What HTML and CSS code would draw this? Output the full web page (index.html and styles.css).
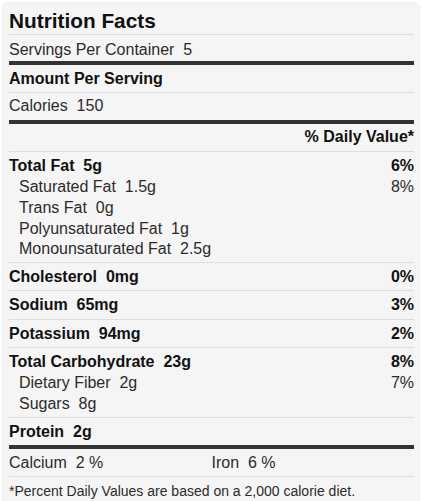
FILE: index.html
```html
<!DOCTYPE html>
<html lang="en">
<head>
<meta charset="utf-8">
<title>Nutrition Facts</title>
<link rel="stylesheet" href="styles.css">
</head>
<body>
<section class="label">
  <h1 class="title">Nutrition Facts</h1>
  <div class="servings">Servings Per Container&nbsp; 5</div>
  <div class="amount">Amount Per Serving</div>
  <div class="calories">Calories&nbsp; 150</div>
  <div class="dv-head">% Daily Value*</div>

  <div class="group group-fat">
    <div class="row main"><span>Total Fat&nbsp; 5g</span><span>6%</span></div>
    <div class="row sub"><span>Saturated Fat&nbsp; 1.5g</span><span>8%</span></div>
    <div class="row sub"><span>Trans Fat&nbsp; 0g</span></div>
    <div class="row sub"><span>Polyunsaturated Fat&nbsp; 1g</span></div>
    <div class="row sub"><span>Monounsaturated Fat&nbsp; 2.5g</span></div>
  </div>

  <div class="group">
    <div class="row main"><span>Cholesterol&nbsp; 0mg</span><span>0%</span></div>
  </div>
  <div class="group">
    <div class="row main"><span>Sodium&nbsp; 65mg</span><span>3%</span></div>
  </div>
  <div class="group">
    <div class="row main"><span>Potassium&nbsp; 94mg</span><span>2%</span></div>
  </div>
  <div class="group">
    <div class="row main"><span>Total Carbohydrate&nbsp; 23g</span><span>8%</span></div>
    <div class="row sub"><span>Dietary Fiber&nbsp; 2g</span><span>7%</span></div>
    <div class="row sub"><span>Sugars&nbsp; 8g</span></div>
  </div>
  <div class="group group-protein">
    <div class="row main"><span>Protein&nbsp; 2g</span></div>
  </div>

  <div class="vitamins">
    <span>Calcium&nbsp; 2 %</span>
    <span>Iron&nbsp; 6 %</span>
  </div>
  <p class="footnote">*Percent Daily Values are based on a 2,000 calorie diet.</p>
</section>
</body>
</html>
```

FILE: styles.css
```css
html, body {
  margin: 0;
  padding: 0;
  background: #ffffff;
}

body {
  font-family: "Liberation Sans", Arial, sans-serif;
  font-size: 16px;
  line-height: 1.3;
  color: #2b2b2b;
}

.label {
  margin: 2px;
  border: 1px solid #efefef;
  border-radius: 6px;
  background: #f5f5f5;
  padding: 5px 5px 16px 6px;
}

.title {
  margin: 0;
  font-size: 20.8px;
  line-height: 26px;
  font-weight: 700;
  color: #111111;
  border-bottom: 1px solid #dddddd;
}

.servings {
  padding: 5px 0 0;
  border-bottom: 4px solid #333333;
}

.amount {
  padding: 4px 0 2px;
  font-weight: 700;
  color: #111111;
  border-bottom: 1px solid #dddddd;
}

.calories {
  padding: 3.5px 0 3px;
  border-bottom: 4px solid #333333;
}

.dv-head {
  padding: 3.5px 0 3px;
  text-align: right;
  font-weight: 700;
  color: #111111;
  border-bottom: 1px solid #dddddd;
}

.group {
  padding: 4px 0 2.5px;
  border-bottom: 1px solid #dddddd;
}

.group-fat {
  padding-bottom: 2px;
}

.group-protein {
  padding-bottom: 2px;
  border-bottom: 4px solid #333333;
}

.row {
  display: flex;
  justify-content: space-between;
}

.row.main {
  font-weight: 700;
  color: #111111;
}

.row.sub {
  padding-left: 10px;
}

.vitamins {
  display: grid;
  grid-template-columns: 1fr 1fr;
  padding: 4px 0 2.5px;
  border-bottom: 1px solid #dddddd;
}

.footnote {
  margin: 0;
  padding: 5px 0 0;
  font-size: 14px;
  line-height: 1.3;
}
```
